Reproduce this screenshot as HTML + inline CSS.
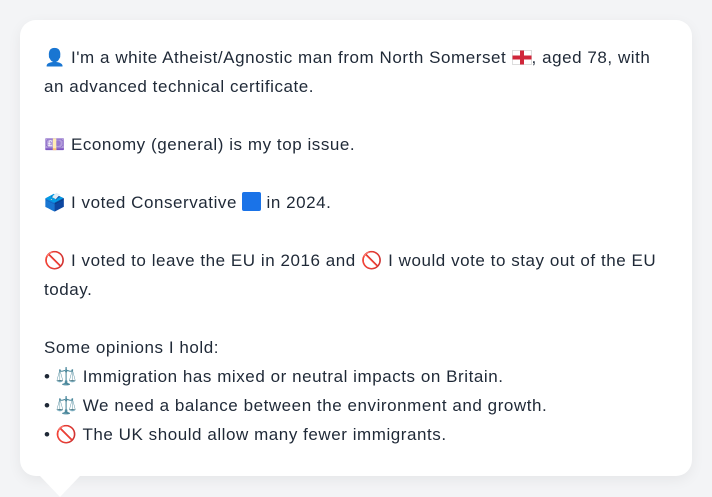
<!DOCTYPE html>
<html><head><style>
html,body{margin:0;padding:0;background:#f3f4f6;width:712px;height:497px;overflow:hidden}
.card{position:absolute;left:20px;top:20px;width:624px;height:408px;padding:23px 24px 25px;background:#fff;border-radius:16px;box-shadow:0 4px 14px rgba(0,0,0,0.06);font-family:"Liberation Sans","DejaVu Sans",sans-serif;font-size:17px;line-height:29px;color:#1f2937;letter-spacing:0.55px}
.tail{position:absolute;left:40px;top:476px;width:0;height:0;border-left:20px solid transparent;border-right:20px solid transparent;border-top:21px solid #fff}
.sq{display:inline-block;width:19px;height:19px;background:#1a73e8;border-radius:2px;vertical-align:-3px}
.fl{display:inline-block;vertical-align:-2px}
</style></head><body>
<div class="card">
<div>👤 I'm a white Atheist/Agnostic man from North Somerset <svg class="fl" width="20" height="15" viewBox="0 0 20 15"><rect x="0.5" y="0.5" width="19" height="14" fill="#fff" stroke="#ddd"/><rect x="8" y="0.5" width="4" height="14" fill="#d0263a"/><rect x="0.5" y="5.5" width="19" height="4" fill="#d0263a"/></svg>, aged 78, with an advanced technical certificate.</div>
<div>&nbsp;</div>
<div>💷 Economy (general) is my top issue.</div>
<div>&nbsp;</div>
<div>🗳️ I voted Conservative <span class="sq"></span> in 2024.</div>
<div>&nbsp;</div>
<div>🚫 I voted to leave the EU in 2016 and 🚫 I would vote to stay out of the EU today.</div>
<div>&nbsp;</div>
<div>Some opinions I hold:</div>
<div>• ⚖️ Immigration has mixed or neutral impacts on Britain.</div>
<div>• ⚖️ We need a balance between the environment and growth.</div>
<div>• 🚫 The UK should allow many fewer immigrants.</div>
</div>
<div class="tail"></div>
</body></html>
